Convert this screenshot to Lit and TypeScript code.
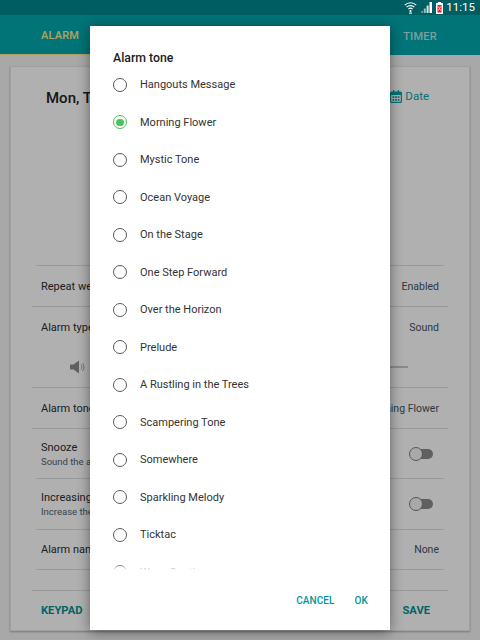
import { LitElement, html, css } from "lit";
import { customElement } from "lit/decorators.js";

const TONES = [
  "Hangouts Message", "Morning Flower", "Mystic Tone", "Ocean Voyage", "On the Stage",
  "One Step Forward", "Over the Horizon", "Prelude", "A Rustling in the Trees",
  "Scampering Tone", "Somewhere", "Sparkling Melody", "Ticktac", "Wave Continue",
];

@customElement("app-root")
export class AppRoot extends LitElement {
  static styles = css`
    :host { display: block; width: 480px; height: 640px; position: relative; overflow: hidden; font-family: Roboto, "Liberation Sans", sans-serif; background: #f1f1f1; color: #2a2a2a; }
    .page { display: flex; flex-direction: column; height: 640px; }
    .status { height: 15px; flex: none; background: #005e62; display: flex; align-items: center; justify-content: flex-end; gap: 4px; padding-right: 5px; color: #fff; position: relative; z-index: 2; }
    .status .time { font-size: 11.5px; letter-spacing: 0; line-height: 15px; margin-left: -1px; }
    .status svg { display: block; }
    .tabs { height: 40px; flex: none; display: grid; grid-template-columns: repeat(4, 1fr); background: #00a6ab; box-sizing: border-box; }
    .tab { display: flex; align-items: center; justify-content: center; padding-top: 2px; box-sizing: border-box; font-size: 11px; font-weight: 500; color: #b4e4e4; letter-spacing: 0.2px; }
    .tab.on { color: #ffe98a; border-bottom: 1px solid #ffe98a; }
    .card { margin: 11px 10px 9px; flex: 1; background: #fcfcfc; border: 1px solid #e4e4e4; box-shadow: 0 1px 2px rgba(0,0,0,.3); display: flex; flex-direction: column; padding: 0 21px; box-sizing: border-box; }
    .top { height: 198px; flex: none; display: flex; justify-content: space-between; padding: 21px 9px 0 14px; box-sizing: border-box; }
    .dt { font-size: 15px; font-weight: 500; color: #222; line-height: 20px; }
    .datebtn { display: flex; align-items: center; gap: 3px; height: 16px; font-size: 11.5px; color: #00a6ab; margin-right: 10px; }
    .rule { height: 1px; flex: none; background: #dcdcdc; }
    .rule.inset { margin: 0 4px; }
    .row { display: flex; justify-content: space-between; align-items: center; padding: 0 9px; font-size: 11px; color: #2c2c2c; box-sizing: border-box; flex: none; }
    .row .val { font-size: 10.5px; color: #45525c; }
    .h39 { height: 39px; } .h40 { height: 40px; } .h20 { height: 20px; } .h49 { height: 49px; } .h50 { height: 50px; }
    .type { height: 80px; display: block; padding: 0; }
    .typeline { display: flex; justify-content: space-between; padding: 14px 9px 0; height: 28px; box-sizing: border-box; }
    .vol { display: flex; align-items: center; gap: 10px; padding: 21px 40px 0 38px; height: 22px; }
    .track { flex: 1; height: 2px; background: #c8c8c8; }
    .sub { font-size: 9.5px; color: #4a6470; margin-top: 1px; line-height: 11px; }
    .two { line-height: 14px; }
    .toggle { width: 24px; height: 14px; position: relative; margin-right: 6px; }
    .toggle::before { content: ""; position: absolute; left: 6px; right: 0; top: 2px; bottom: 2px; border-radius: 5px; background: #8a8a8a; }
    .toggle::after { content: ""; position: absolute; left: 0; top: 0; width: 12px; height: 12px; border-radius: 50%; background: #f2f2f2; border: 1px solid #7c7c7c; }
    .actions { flex: 1; display: flex; justify-content: space-between; align-items: center; padding: 0 18px 0 9px; font-size: 11.2px; font-weight: 700; color: #00918f; }
    .scrim { position: absolute; inset: 0; background: rgba(0,0,0,.3); }
    .dialog { position: absolute; left: 90px; top: 26px; width: 300px; height: 604px; background: #fff; box-shadow: 0 2px 12px rgba(0,0,0,.45); display: flex; flex-direction: column; box-sizing: border-box; }
    .title { height: 40px; flex: none; padding: 24px 23px 0; box-sizing: border-box; font-size: 12.3px; font-weight: 500; color: #1c1c1c; line-height: 16px; }
    .listwrap { height: 509px; flex: none; position: relative; }
    .listwrap::after { content: ""; position: absolute; left: 0; right: 0; bottom: 0; height: 11px; background: linear-gradient(rgba(255,255,255,0), #fff 55%); }
    .list { height: 509px; overflow: hidden; }
    .item { height: 37.5px; display: flex; align-items: center; padding-left: 23px; gap: 13px; font-size: 11px; color: #333; }
    .radio { width: 14px; height: 14px; border: 1.4px solid #5a5a5a; border-radius: 50%; box-sizing: border-box; flex: none; display: flex; align-items: center; justify-content: center; }
    .radio.on { border-color: #4cc35a; }
    .radio.on::after { content: ""; width: 7.5px; height: 7.5px; border-radius: 50%; background: #4cc35a; }
    .btns { flex: 1; display: flex; justify-content: flex-end; gap: 20px; padding: 15px 22px 0 0; box-sizing: border-box; font-size: 10px; font-weight: 500; color: #0097a0; letter-spacing: 0.1px; line-height: 22px; }
  `;

  render() {
    return html`
      <div class="page">
        <div class="status">
          <svg width="13" height="13" viewBox="0 0 13 13"><g fill="none" stroke="#fff" stroke-width="1.100"><path d="M.8 4.200a8 8 0 0 1 11.400 0"/><path d="M2.600 6.200a5.500 5.500 0 0 1 7.800 0"/><path d="M4.400 8.200a3 3 0 0 1 4.200 0"/></g><circle cx="6.500" cy="10" r="1.100" fill="#fff"/><path d="M5 11.500h3v1.200H5z" fill="#cfe"/></svg>
          <svg width="11" height="11" viewBox="0 0 11 11"><path fill="#fff" d="M8.500 0H11v11H8.500z"/><path fill="#fff" opacity=".85" d="M5.600 3.500h2V11h-2z"/><path fill="#fff" opacity=".6" d="M2.800 6.500h2V11h-2z"/><path fill="#fff" opacity=".4" d="M.2 9H2v2H.2z"/></svg>
          <svg width="7" height="12" viewBox="0 0 7 12"><path fill="#fff" d="M2 0h3v1h1.500a.5.5 0 0 1 .5.500V11.500a.5.5 0 0 1-.5.5H.5a.5.5 0 0 1-.5-.5V1.500A.5.5 0 0 1 .5 1H2z"/><path fill="#e0202a" d="M1.500 3h4v7.500h-4z"/><path fill="none" stroke="#fff" stroke-width=".8" d="M2.200 4.500l2.600 4M4.800 4.500l-2.600 4"/></svg>
          <span class="time">11:15</span>
        </div>
        <div class="tabs">
          <div class="tab on">ALARM</div><div class="tab">WORLD</div><div class="tab">STOPWATCH</div><div class="tab">TIMER</div>
        </div>
        <div class="card">
          <div class="top">
            <div class="dt">Mon, Tue</div>
            <div class="datebtn">
              <svg width="12" height="13" viewBox="0 0 12 13"><path fill="#00a6ab" d="M1.500 1.500H3V0h1.200v1.500h3.600V0H9v1.500h1.500A1.500 1.500 0 0 1 12 3v8.500a1.500 1.500 0 0 1-1.500 1.500h-9A1.500 1.500 0 0 1 0 11.500V3a1.500 1.500 0 0 1 1.500-1.500zM1.200 5v6.300c0 .3.2.5.5.5h8.600c.3 0 .5-.2.5-.5V5zM2.500 6.200h1.800V8H2.500zm2.600 0h1.800V8H5.100zm2.600 0h1.800V8H7.700zM2.500 9h1.800v1.800H2.500zm2.600 0h1.800v1.800H5.100zm2.600 0h1.800v1.800H7.700z"/></svg>
              Date
            </div>
          </div>
          <div class="rule inset"></div>
          <div class="row h40"><span>Repeat weekly</span><span class="val">Enabled</span></div>
          <div class="rule"></div>
          <div class="row type">
            <div class="typeline"><span>Alarm type</span><span class="val">Sound</span></div>
            <div class="vol">
              <svg width="16" height="14" viewBox="0 0 16 14"><path fill="#8c8c8c" d="M0 4.500h3.500L9 .5v13l-5.500-4H0z"/><path fill="none" stroke="#a4a4a4" d="M10.800 4.500a3.400 3.400 0 0 1 0 5M12.500 3a6 6 0 0 1 0 8"/></svg>
              <div class="track"></div>
            </div>
          </div>
          <div class="rule"></div>
          <div class="row h40"><span>Alarm tone</span><span class="val">Morning Flower</span></div>
          <div class="rule"></div>
          <div class="row h49"><div class="two">Snooze<div class="sub">Sound the alarm again</div></div><div class="toggle"></div></div>
          <div class="rule inset"></div>
          <div class="row h50"><div class="two">Increasing volume<div class="sub">Increase the volume</div></div><div class="toggle"></div></div>
          <div class="rule inset"></div>
          <div class="row h39"><span>Alarm name</span><span class="val">None</span></div>
          <div class="rule inset"></div>
          <div class="row h20"></div>
          <div class="rule"></div>
          <div class="actions"><span>KEYPAD</span><span>SAVE</span></div>
        </div>
      </div>
      <div class="scrim"></div>
      <div class="dialog">
        <div class="title">Alarm tone</div>
        <div class="listwrap">
          <div class="list">
            ${TONES.map((t, i) => html`<div class="item"><span class="radio ${i === 1 ? "on" : ""}"></span>${t}</div>`)}
          </div>
        </div>
        <div class="btns"><span>CANCEL</span><span>OK</span></div>
      </div>
    `;
  }
}
